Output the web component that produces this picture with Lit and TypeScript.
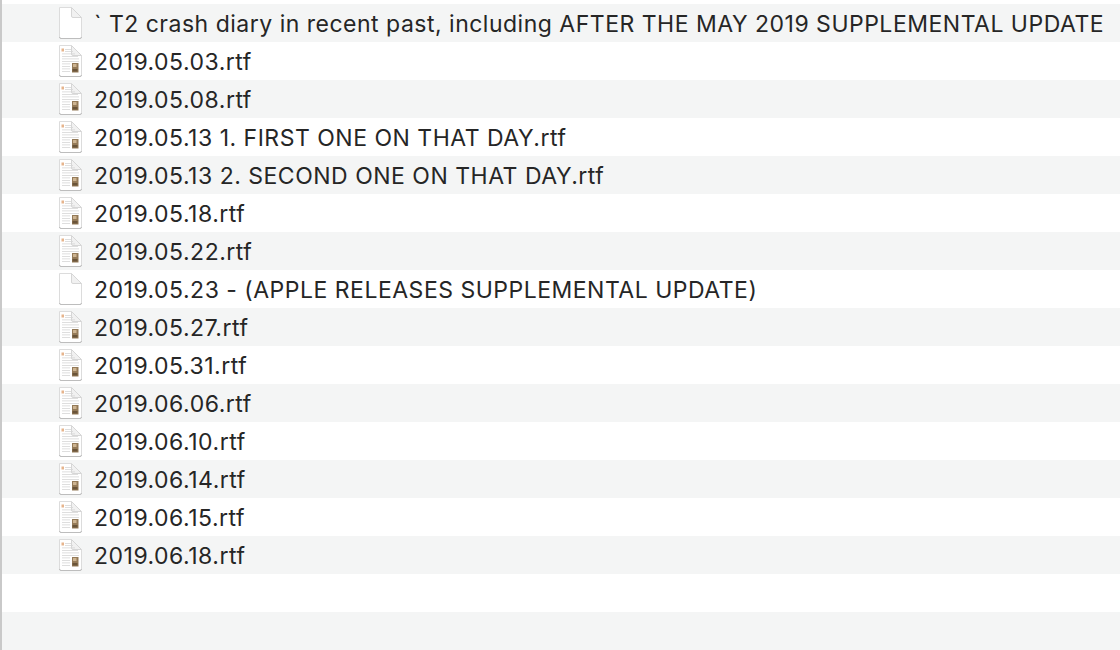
import { LitElement, html, css, svg } from "lit";
import { customElement } from "lit/decorators.js";

const FILES: [string, boolean][] = [
  ["` T2 crash diary in recent past, including AFTER THE MAY 2019 SUPPLEMENTAL UPDATE", false],
  ["2019.05.03.rtf", true],
  ["2019.05.08.rtf", true],
  ["2019.05.13 1. FIRST ONE ON THAT DAY.rtf", true],
  ["2019.05.13 2. SECOND ONE ON THAT DAY.rtf", true],
  ["2019.05.18.rtf", true],
  ["2019.05.22.rtf", true],
  ["2019.05.23 - (APPLE RELEASES SUPPLEMENTAL UPDATE)", false],
  ["2019.05.27.rtf", true],
  ["2019.05.31.rtf", true],
  ["2019.06.06.rtf", true],
  ["2019.06.10.rtf", true],
  ["2019.06.14.rtf", true],
  ["2019.06.15.rtf", true],
  ["2019.06.18.rtf", true],
  ["", false],
  ["", false],
];

const lines = [
  [8, 7, 5], [8, 8, 7], [5, 13, 9.5], [5, 16, 12], [5, 17, 14.5], [5, 17, 17], [5, 8, 19.5],
  [5, 8, 22], [5, 8, 24.5], [5, 8, 27],
];

function icon(rich: boolean) {
  return html`<svg class="icon" width="26" height="34" viewBox="0 0 26 34">
    <path d="M2.5 1.5 H14.5 L24.5 11.5 V31 Q24.5 32.5 23 32.5 H4 Q2.5 32.5 2.5 31 Z" fill="#fff" stroke="#dcdcdc" stroke-width="1"/>
    <path d="M2.5 31 Q2.5 32.5 4 32.5 H23 Q24.5 32.5 24.5 31" fill="none" stroke="#bdbdbd" stroke-width="1"/>
    <path d="M14.5 1.5 V10 Q14.5 11.5 16 11.5 H24.5 Z" fill="#f1f1f1" stroke="#d6d6d6" stroke-width="1"/>
    ${rich
      ? svg`<rect x="4.5" y="4.5" width="2.5" height="3" fill="#e6b48c"/>
        ${lines.map(([a, b, y]) => svg`<rect x=${a} y=${y} width=${b} height="0.8" fill="#d6d6d6"/>`)}
        <rect x="15" y="19" width="6.5" height="9.5" fill="#947a58"/>
        <rect x="16" y="20" width="3.5" height="3" fill="#cdb491"/>
        <rect x="15.5" y="25" width="5" height="2.5" fill="#6a5439"/>`
      : ""}
  </svg>`;
}

@customElement("app-root")
export class AppRoot extends LitElement {
  static styles = css`
    :host {
      display: block;
      width: 1120px;
      height: 650px;
      overflow: hidden;
      background: #fff;
      font-family: "Inter", "Liberation Sans", sans-serif;
    }
    .list {
      display: flex;
      flex-direction: column;
      height: 650px;
      padding-top: 4px;
      box-sizing: border-box;
      border-left: 2px solid #c9c9c9;
    }
    .row {
      flex: 0 0 38px;
      display: flex;
      align-items: center;
      padding-left: 55px;
      gap: 11px;
      color: #262626;
      font-size: 23px;
      letter-spacing: 0.5px;
      white-space: nowrap;
      background: #fff;
    }
    .row.alt {
      background: #f4f5f5;
    }
    .icon {
      flex: none;
      filter: blur(0.3px);
    }
    .name {
      padding-top: 2px;
    }
  `;

  render() {
    return html`<div class="list">
      ${FILES.map(
        ([name, rich], i) => html`<div class="row ${i % 2 === 0 ? "alt" : ""}">
          ${name ? icon(rich) : ""}<span class="name">${name}</span>
        </div>`
      )}
    </div>`;
  }
}
